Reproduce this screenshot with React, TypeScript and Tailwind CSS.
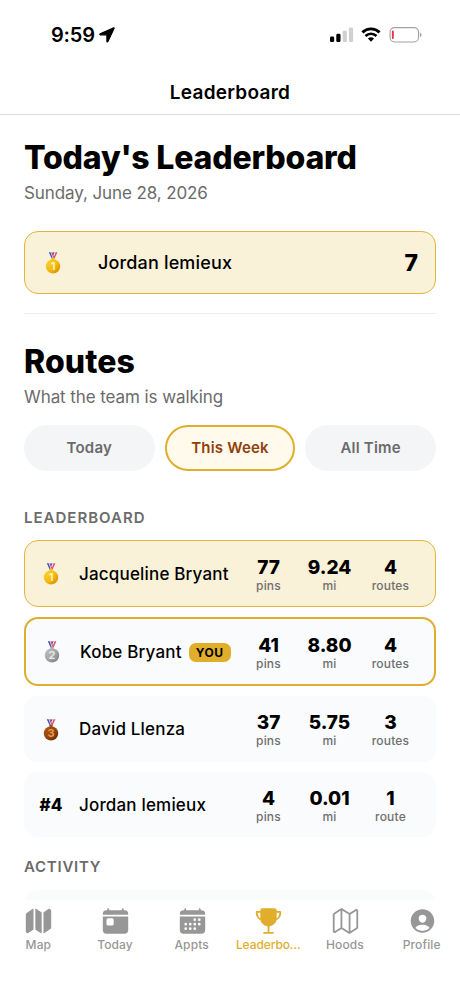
import { useState } from "react";
import type { IconType } from "react-icons";
import { IoCalendar, IoMap, IoMapOutline, IoPersonCircle, IoToday, IoTrophy } from "react-icons/io5";
import clsx from "clsx";

type Runner = {
  rank: number;
  name: string;
  pins: number;
  miles: string;
  routes: number;
  you?: boolean;
};

const runners: Runner[] = [
  { rank: 1, name: "Jacqueline Bryant", pins: 77, miles: "9.24", routes: 4 },
  { rank: 2, name: "Kobe Bryant", pins: 41, miles: "8.80", routes: 4, you: true },
  { rank: 3, name: "David Llenza", pins: 37, miles: "5.75", routes: 3 },
  { rank: 4, name: "Jordan lemieux", pins: 4, miles: "0.01", routes: 1 },
];

const tabs: { label: string; icon: IconType; active?: boolean }[] = [
  { label: "Map", icon: IoMap },
  { label: "Today", icon: IoToday },
  { label: "Appts", icon: IoCalendar },
  { label: "Leaderbo…", icon: IoTrophy, active: true },
  { label: "Hoods", icon: IoMapOutline },
  { label: "Profile", icon: IoPersonCircle },
];

const medals = [
  { light: "#ffdc3c", mid: "#f5b914", dark: "#cf8500", num: "#fff3b0" },
  { light: "#c9c9c9", mid: "#a3a3a3", dark: "#7b7b7b", num: "#e8e8e8" },
  { light: "#b5601c", mid: "#94440f", dark: "#642907", num: "#eb9a4c" },
];

const Medal = ({ place }: { place: number }) => {
  const c = medals[place - 1];
  const id = `medal-${place}`;
  return (
    <svg width="16" height="22" viewBox="0 0 16 22">
      <defs>
        <linearGradient id={id} x1="0" y1="0" x2="1" y2="1">
          <stop offset="0" stopColor={c.light} />
          <stop offset="0.55" stopColor={c.mid} />
          <stop offset="1" stopColor={c.dark} />
        </linearGradient>
      </defs>
      <path d="M3.8 0.2h8.6l-2.8 6.6H6.9z" fill="#eeeaf4" />
      <path d="M3.8 0.2h1.7l2.4 6.4H6.7z" fill="#3f50b8" />
      <path d="M6.3 0.2h1.3l1.2 4-0.5 1.6z" fill="#d8405c" />
      <path d="M9.6 0.2H8.4L7.9 1.6l0.5 1.5z" fill="#3f50b8" />
      <path d="M12.4 0.2h-1.7L8.2 6.6h1.3z" fill="#dd4a62" />
      <rect x="6.5" y="5.8" width="3" height="2.4" rx="0.8" fill={c.mid} />
      <circle cx="8" cy="14.4" r="7.2" fill={`url(#${id})`} />
      <circle cx="8" cy="14.4" r="5.9" fill="none" stroke={c.dark} strokeOpacity="0.25" strokeWidth="0.5" />
      <text x="8" y="18.4" textAnchor="middle" fontSize="11" fontWeight="700" fill={c.num}>
        {place}
      </text>
    </svg>
  );
};

const StatusBar = () => (
  <div className="flex h-[70px] items-center pl-[51px] pr-[38px]">
    <span className="text-[20px] font-semibold leading-6 tracking-[-0.2px]">9:59</span>
    <svg className="ml-[4px]" width="16" height="16" viewBox="0 0 16 16">
      <path
        d="M14.7 0.9 1.2 6.9c-0.6 0.3-0.5 0.9 0.2 0.9h6c0.4 0 0.5 0.1 0.5 0.5v6c0 0.7 0.7 0.8 1 0.2L15.1 1.3c0.2-0.3-0.1-0.5-0.4-0.4z"
        stroke="#000"
        strokeWidth="1.2"
        strokeLinejoin="round"
      />
    </svg>
    <div className="ml-auto flex items-center">
      <svg width="24" height="16" viewBox="0 0 24 16">
        <rect x="0" y="9.6" width="4.2" height="5.4" rx="1.2" />
        <rect x="6.3" y="6.8" width="4.2" height="8.2" rx="1.2" />
        <rect x="12.7" y="3.8" width="4.2" height="11.2" rx="1.2" fill="#d0d0d0" />
        <rect x="18.9" y="0.5" width="4.2" height="14.5" rx="1.2" fill="#d0d0d0" />
      </svg>
      <svg className="ml-[7px]" width="20" height="16" viewBox="0 0 20 16" fill="none" stroke="#000">
        <path d="M1.4 5.4C6.3 0.7 13.7 0.7 18.6 5.4" strokeWidth="2.9" />
        <path d="M4.5 8.9C7.7 6 12.3 6 15.5 8.9" strokeWidth="2.7" />
        <path d="M6.9 11.6Q10 9 13.1 11.6L10 14.7z" fill="#000" stroke="none" />
      </svg>
      <svg className="ml-[8px]" width="33" height="16" viewBox="0 0 33 16">
        <rect x="1.1" y="0.6" width="28.4" height="14.4" rx="4.4" fill="none" stroke="#a2a2a2" strokeWidth="1.1" />
        <rect x="2.9" y="3.6" width="1.9" height="8.4" rx="0.9" fill="#f0304b" />
        <path d="M30.9 5.4c2.2 1 2.2 3.8 0 4.8z" fill="#a2a2a2" />
      </svg>
    </div>
  </div>
);

const Stat = ({ value, label }: { value: string | number; label: string }) => (
  <div className="flex w-[61px] flex-col items-center">
    <span className="text-[19px] font-extrabold leading-[22px]">{value}</span>
    <span className="text-[12px] font-medium leading-[14px] tracking-[0.2px] text-[#6f6f6f]">{label}</span>
  </div>
);

const RunnerRow = ({ runner }: { runner: Runner }) => (
  <li
    className={clsx(
      "flex items-center rounded-[14px] border-solid",
      runner.rank === 1 && "h-[67px] border border-[#e3b53c] bg-[#faf1d9] px-[13px]",
      runner.you && "h-[69px] border-2 border-[#dfae2e] bg-[#fafbfc] px-[13px]",
      runner.rank === 3 && "h-[66px] bg-[#fafbfc] px-[14px]",
      runner.rank > 3 && "h-[65px] bg-[#fafbfc] px-[14px]"
    )}
  >
    <div className="flex w-[26px] shrink-0 justify-center pt-px">
      {runner.rank <= 3 ? (
        <Medal place={runner.rank} />
      ) : (
        <span className="pt-px text-[17px] font-extrabold">#{runner.rank}</span>
      )}
    </div>
    <div className="ml-[15px] flex min-w-0 flex-1 items-center gap-[7px] pt-[2px]">
      <span className="whitespace-nowrap text-[17px] font-medium tracking-[0.18px]">{runner.name}</span>
      {runner.you && (
        <span className="flex h-[19px] w-[42px] items-center justify-center rounded-[7px] bg-[#e0ae2b] text-[12px] font-bold tracking-[0.5px]">
          YOU
        </span>
      )}
    </div>
    <div className={clsx("flex pt-[2px]", runner.you ? "mr-0" : "mr-[1px]")}>
      <Stat value={runner.pins} label="pins" />
      <Stat value={runner.miles} label="mi" />
      <Stat value={runner.routes} label={runner.routes === 1 ? "route" : "routes"} />
    </div>
  </li>
);

const periods = ["Today", "This Week", "All Time"];

const App = () => {
  const [period, setPeriod] = useState("This Week");

  return (
    <div className="flex h-[996px] w-[460px] flex-col overflow-hidden bg-white font-['Inter',sans-serif] text-black">
      <header className="h-[115px] shrink-0 border-b border-[#dcdcdc]">
        <StatusBar />
        <h1 className="mt-[9px] text-center text-[19px] font-semibold leading-[27px] tracking-[0.25px]">Leaderboard</h1>
      </header>

      <main className="min-h-0 flex-1 overflow-hidden px-6">
        <h2 className="mt-[23px] text-[32px] font-extrabold leading-[40px] tracking-[-0.18px]">Today's Leaderboard</h2>
        <p className="mt-[4px] text-[17px] leading-[22px] tracking-[-0.1px] text-[#6b6b6b]">Sunday, June 28, 2026</p>

        <div className="mt-[27px] flex h-[63px] items-center rounded-[14px] border border-[#e3b53c] bg-[#faf1d9] pl-[20px] pr-[17px]">
          <Medal place={1} />
          <span className="ml-[37px] text-[18px] font-medium tracking-[0.16px]">Jordan lemieux</span>
          <span className="ml-auto pt-[2px] text-[23px] font-extrabold">7</span>
        </div>

        <div className="mt-[19px] h-px bg-[#ededee]" />

        <h2 className="mt-[28px] text-[32px] font-extrabold leading-[40px] tracking-[0.1px]">Routes</h2>
        <p className="mt-[4px] text-[17px] leading-[22px] tracking-[-0.08px] text-[#6b6b6b]">What the team is walking</p>

        <div className="mt-[17px] grid grid-cols-3 gap-[10px]">
          {periods.map((p) => (
            <button
              key={p}
              onClick={() => setPeriod(p)}
              className={clsx(
                "h-[46px] rounded-full pt-px text-[15px] font-semibold tracking-[0.2px]",
                p === period
                  ? "border-2 border-[#dfae2e] bg-[#fffaeb] text-[#923f0e]"
                  : "bg-[#f3f5f7] text-[#6b6b6b]"
              )}
            >
              {p}
            </button>
          ))}
        </div>

        <h3 className="mt-[37px] text-[15px] font-semibold leading-5 tracking-[1px] text-[#6b6b6b]">LEADERBOARD</h3>
        <ul className="mt-[12px] flex flex-col gap-[10px]">
          {runners.map((r) => (
            <RunnerRow key={r.rank} runner={r} />
          ))}
        </ul>

        <h3 className="mt-[20px] text-[15px] font-semibold leading-5 tracking-[0.75px] text-[#6b6b6b]">ACTIVITY</h3>
        <div className="mt-[13px] h-[66px] rounded-[14px] bg-[#fafbfb]" />
      </main>

      <nav className="grid h-[96px] shrink-0 grid-cols-6 content-start bg-white pt-[6px]">
        {tabs.map(({ label, icon: Icon, active }) => (
          <button
            key={label}
            className={clsx("flex flex-col items-center", active ? "text-[#e0ae2b]" : "text-[#979797]")}
          >
            <Icon size={30} className="h-[30px] w-[30px] p-[0.5px] pl-[1px] pr-0" />
            <span
              className={clsx(
                "mt-[1px] whitespace-nowrap text-[12px] font-medium leading-4",
                active ? "tracking-[-0.1px]" : "tracking-[0.1px]"
              )}
            >
              {label}
            </span>
          </button>
        ))}
      </nav>
    </div>
  );
};

export default App;
